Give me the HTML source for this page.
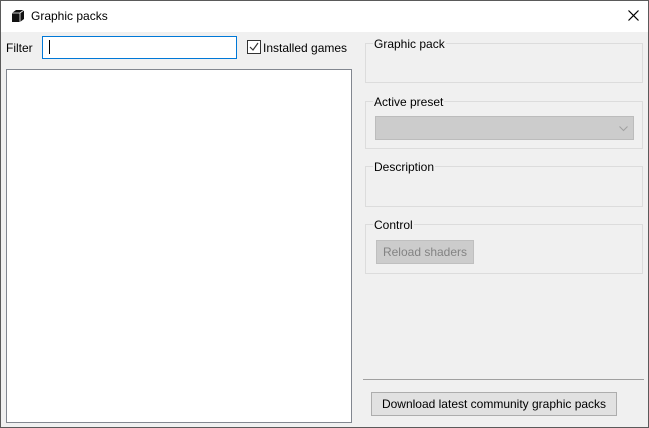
<html><head><style>
body{margin:0;width:649px;height:428px;overflow:hidden;font-family:"Liberation Sans",sans-serif;font-size:12px;color:#000}
.win{position:absolute;left:0;top:0;width:647px;height:426px;border:1px solid #5a5a5a;background:#f0f0f0}
.tb{position:absolute;left:0;top:0;width:647px;height:31px;background:#fff}
.a{position:absolute}
.g{position:absolute;border:1px solid #dcdcdc;}
.gl{position:absolute;background:#f0f0f0;padding:0 1px;}
</style></head><body><div class="win">
<div class="tb">
<svg class="a" style="left:10px;top:8px" width="14" height="14" viewBox="0 0 14 14"><path d="M1 4 L5 1 L13 1 L13 10 L9 13 L1 13 Z" fill="#111"/><path d="M1 4 L9 4 L13 1 M9 4 L9 13" stroke="#fff" stroke-width="0.8" fill="none"/></svg>
<div class="a" style="left:30px;top:8px">Graphic packs</div>
<svg class="a" style="left:627px;top:9px" width="11" height="11"><path d="M0.5 0.5 L10.5 10.5 M10.5 0.5 L0.5 10.5" stroke="#000" stroke-width="1.2"/></svg>
</div>
<div class="a" style="left:5px;top:40px">Filter</div>
<div class="a" style="left:41px;top:35px;width:193px;height:21px;border:1px solid #0078d7;background:#fff"><div class="a" style="left:6px;top:3px;width:1px;height:14px;background:#000"></div></div>
<div class="a" style="left:246px;top:39px;width:12px;height:12px;border:1px solid #333;background:#fff"><svg width="12" height="12"><path d="M2 6 L5 9 L10 2" stroke="#333" stroke-width="1.2" fill="none"/></svg></div>
<div class="a" style="left:262px;top:40px">Installed games</div>
<div class="a" style="left:5px;top:68px;width:344px;height:352px;border:1px solid #828790;background:#fff"></div>
<div class="g" style="left:364px;top:42px;width:276px;height:38px"></div><div class="gl" style="left:372px;top:36px">Graphic pack</div>
<div class="g" style="left:364px;top:100px;width:276px;height:46px"></div><div class="gl" style="left:372px;top:94px">Active preset</div>
<div class="a" style="left:374px;top:115px;width:257px;height:22px;border:1px solid #bcbcbc;background:#cccccc"><svg class="a" style="left:243px;top:9px" width="9" height="6"><path d="M0.5 0.5 L4.5 4.5 L8.5 0.5" stroke="#a0a0a0" fill="none"/></svg></div>
<div class="g" style="left:364px;top:165px;width:276px;height:39px"></div><div class="gl" style="left:372px;top:159px">Description</div>
<div class="g" style="left:364px;top:223px;width:276px;height:48px"></div><div class="gl" style="left:372px;top:217px">Control</div>
<div class="a" style="left:375px;top:239px;width:96px;height:22px;border:1px solid #bfbfbf;background:#cccccc;color:#838383;text-align:center;line-height:22px">Reload shaders</div>
<div class="a" style="left:362px;top:378px;width:281px;height:1px;background:#a0a0a0"></div>
<div class="a" style="left:370px;top:391px;width:244px;height:22px;border:1px solid #adadad;background:#e1e1e1;text-align:center;line-height:22px">Download latest community graphic packs</div>
</div></body></html>
